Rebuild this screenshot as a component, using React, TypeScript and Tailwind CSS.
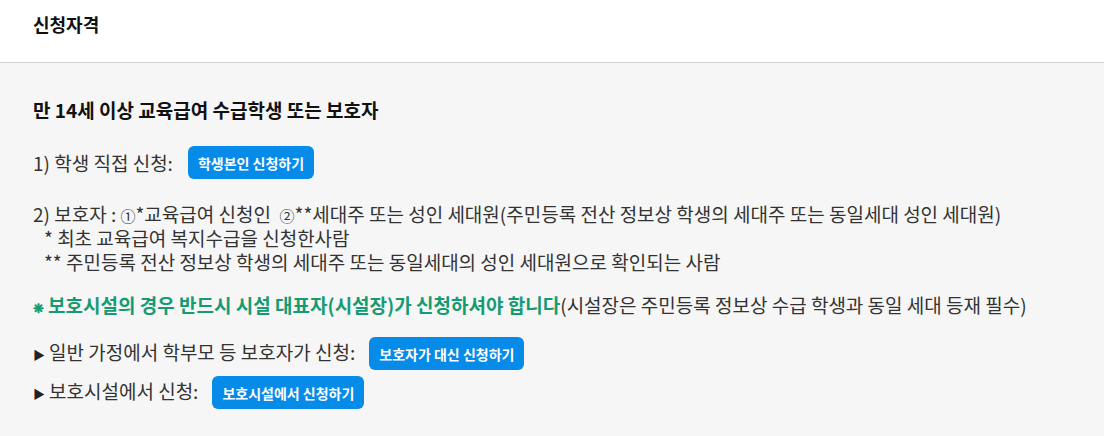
import React from 'react';

const FONT = { fontFamily: '"Noto Sans CJK KR", "Noto Sans", sans-serif' };

function ApplyButton({ label }: { label: string }) {
  return (
    <button
      type="button"
      className="h-[33px] rounded-[6px] bg-[#068be9] px-[10px] text-[14px] font-bold text-white"
    >
      {label}
    </button>
  );
}

function Bullet() {
  return <span className="mr-[4px] text-[12px] text-[#222]">▶</span>;
}

export default function App() {
  return (
    <div className="w-[1104px] h-[436px] bg-[#f6f6f6]" style={FONT}>
      <header className="flex h-[63px] items-center border-b border-[#d2d2d2] bg-white px-[33px] pb-[14px]">
        <h1 className="text-[18px] font-bold text-[#111]">신청자격</h1>
      </header>

      <section className="flex flex-col px-[33px] pt-[35px] text-[19px] leading-[24px] text-[#333]">
        <h2 className="font-bold text-[#111]">만 14세 이상 교육급여 수급학생 또는 보호자</h2>

        <div className="mt-[24px] flex items-center gap-[15px]">
          <span>1) 학생 직접 신청:</span>
          <ApplyButton label="학생본인 신청하기" />
        </div>

        <div className="mt-[23px] flex flex-col">
          <p>
            2) 보호자 : <span className="text-[15px] leading-none">①</span>*교육급여 신청인&nbsp;&nbsp;
            <span className="text-[15px] leading-none">②</span>**세대주 또는 성인 세대원(주민등록 전산 정보상
            학생의 세대주 또는 동일세대 성인 세대원)
          </p>
          <p className="pl-[11px]">* 최초 교육급여 복지수급을 신청한사람</p>
          <p className="pl-[11px]">** 주민등록 전산 정보상 학생의 세대주 또는 동일세대의 성인 세대원으로 확인되는 사람</p>
        </div>

        <p className="mt-[19px]">
          <span className="font-bold text-[#159b72]">
            <span className="mr-[4px] text-[13px]">❋</span>보호시설의 경우 반드시 시설 대표자(시설장)가 신청하셔야 합니다
          </span>
          (시설장은 주민등록 정보상 수급 학생과 동일 세대 등재 필수)
        </p>

        <div className="mt-[17px] flex items-center gap-[14px]">
          <span>
            <Bullet />일반 가정에서 학부모 등 보호자가 신청:
          </span>
          <ApplyButton label="보호자가 대신 신청하기" />
        </div>

        <div className="mt-[6px] flex items-center gap-[14px]">
          <span>
            <Bullet />보호시설에서 신청:
          </span>
          <ApplyButton label="보호시설에서 신청하기" />
        </div>
      </section>
    </div>
  );
}
